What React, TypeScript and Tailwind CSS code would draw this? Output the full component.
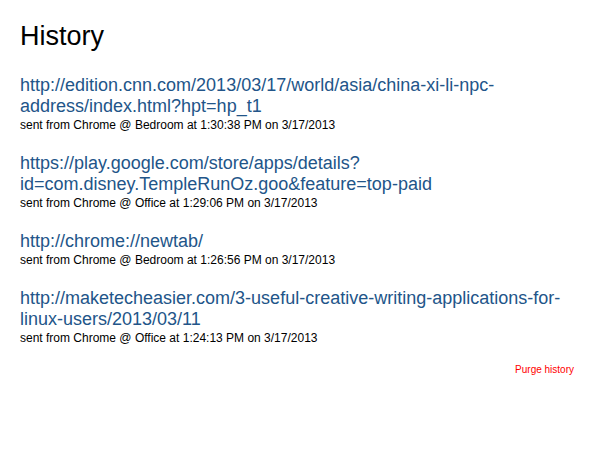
const entries = [
  {
    url: "http://edition.cnn.com/2013/03/17/world/asia/china-xi-li-npc-address/index.html?hpt=hp_t1",
    device: "Bedroom",
    time: "1:30:38 PM",
  },
  {
    url: "https://play.google.com/store/apps/details?id=com.disney.TempleRunOz.goo&feature=top-paid",
    device: "Office",
    time: "1:29:06 PM",
  },
  {
    url: "http://chrome://newtab/",
    device: "Bedroom",
    time: "1:26:56 PM",
  },
  {
    url: "http://maketecheasier.com/3-useful-creative-writing-applications-for-linux-users/2013/03/11",
    device: "Office",
    time: "1:24:13 PM",
  },
];

export default function App() {
  return (
    <div className="w-[596px] h-[452px] bg-white px-5 pt-[18px] font-['Liberation_Sans',Arial,sans-serif]">
      <h1 className="text-[27px] leading-[36px] text-black">History</h1>

      <div className="mt-[21px] flex flex-col gap-[21px]">
        {entries.map((e, i) => (
          <div key={i}>
            <a href="#" className="block text-[18px] leading-[21px] text-[#225589] break-words">
              {e.url}
            </a>
            <p className="mt-[1px] text-[12px] leading-[14px] text-black">
              sent from Chrome @ {e.device} at {e.time} on 3/17/2013
            </p>
          </div>
        ))}
      </div>

      <div className="mt-[19px] flex justify-end pr-[2px]">
        <a href="#" className="text-[10px] leading-[12px] text-[#ff0000]">
          Purge history
        </a>
      </div>
    </div>
  );
}
